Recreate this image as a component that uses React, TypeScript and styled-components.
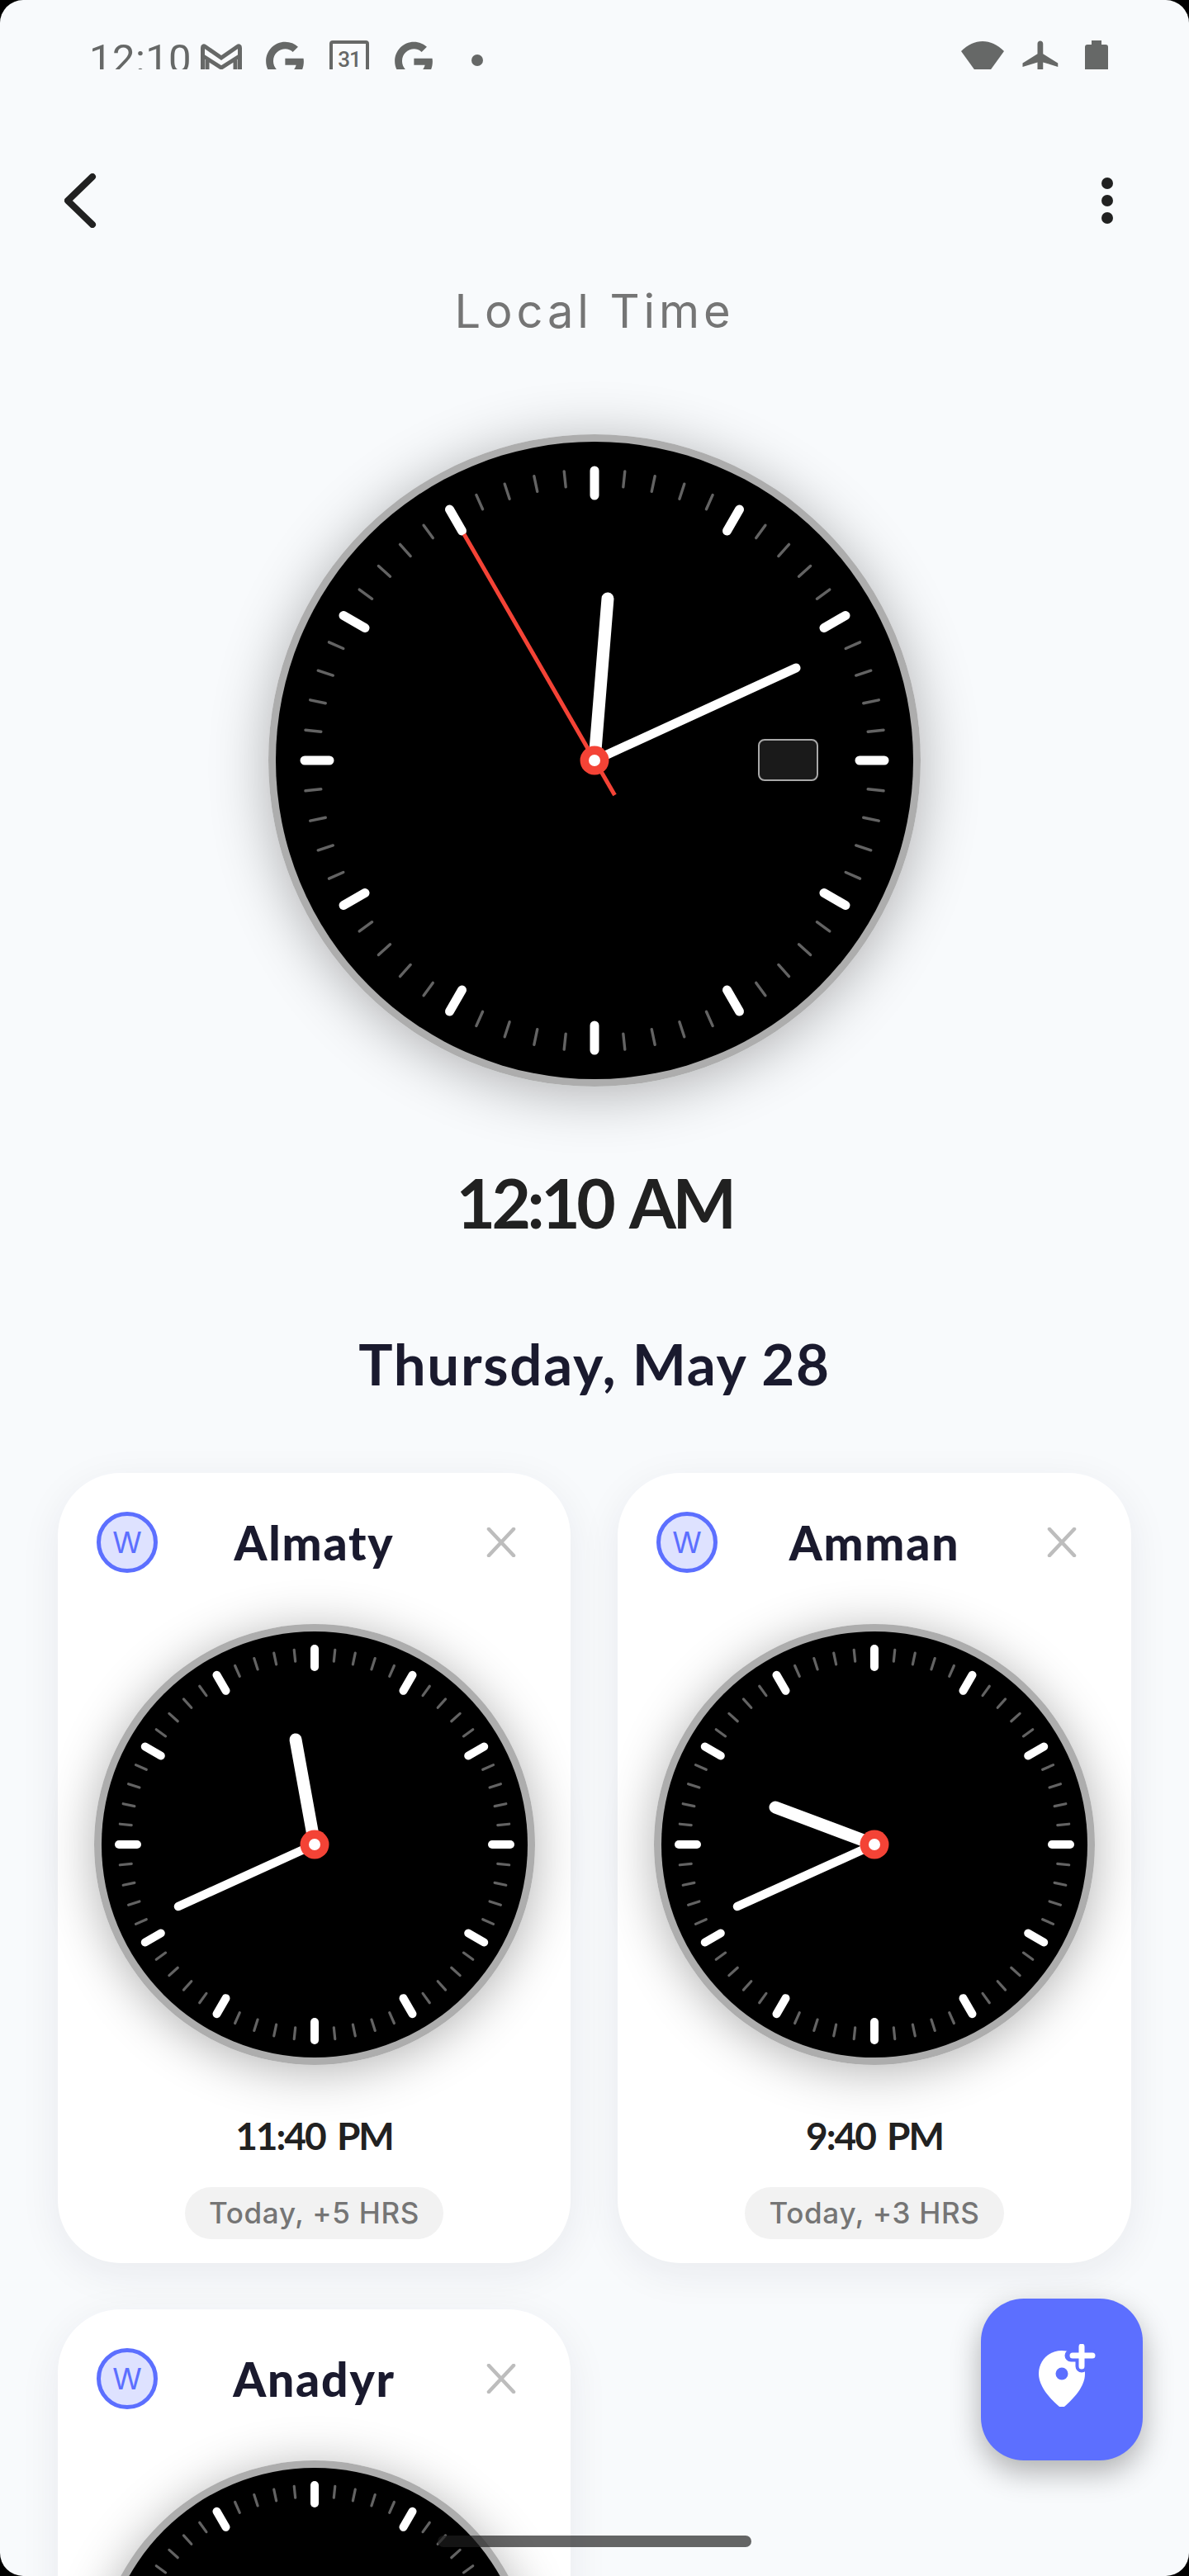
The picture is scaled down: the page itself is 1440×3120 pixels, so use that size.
import React from "react";
import styled, { createGlobalStyle } from "styled-components";
import { FaGoogle } from "react-icons/fa";

const GlobalStyle = createGlobalStyle`
  html, body {
    margin: 0;
    padding: 0;
    background: #000;
  }
  * {
    box-sizing: border-box;
  }
`;

const BLUE = "#5c6fff";
const INK = "#1a1a2e";
const STATUS_GREY = "#666867";

const Screen = styled.div`
  position: relative;
  width: 1440px;
  height: 3120px;
  overflow: hidden;
  border-radius: 28px;
  background: #f8fafc;
  display: flex;
  flex-direction: column;
  font-family: "Inter", "Liberation Sans", sans-serif;
`;

/* Status bar: the icons run past the bar's bottom edge and get cut off */
const StatusBar = styled.div`
  height: 84px;
  flex: none;
  overflow: hidden;
  display: flex;
  justify-content: space-between;
  padding: 0 98px 0 108px;
  color: ${STATUS_GREY};
`;

const StatusGroup = styled.div`
  display: flex;
  align-items: flex-start;
`;

const ClockText = styled.span`
  font-family: "Roboto", sans-serif;
  font-weight: 400;
  font-size: 49px;
  line-height: 49px;
  letter-spacing: 0.4px;
  margin-top: 47px;
  width: 135px;
`;

const GlyphSlot = styled.span<{ $top: number; $gap: number }>`
  display: block;
  line-height: 0;
  margin-top: ${(p) => p.$top}px;
  margin-right: ${(p) => p.$gap}px;
`;

const CalendarBadge = styled.div`
  width: 48px;
  height: 50px;
  margin-top: 49px;
  margin-right: 30px;
  border: 4px solid ${STATUS_GREY};
  border-radius: 4px;
  font-family: "Roboto", sans-serif;
  font-weight: 500;
  font-size: 26px;
  line-height: 26px;
  letter-spacing: -1px;
  text-align: center;
  padding-top: 6px;
`;

const Dot = styled.span`
  width: 14px;
  height: 14px;
  margin-top: 66px;
  border-radius: 50%;
  background: ${STATUS_GREY};
`;

const Battery = styled.div`
  position: relative;
  width: 28px;
  height: 60px;
  margin-top: 54px;
  border-radius: 3px;
  background: ${STATUS_GREY};
  &::before {
    content: "";
    position: absolute;
    top: -5px;
    left: 8px;
    width: 12px;
    height: 6px;
    background: ${STATUS_GREY};
  }
`;

const Toolbar = styled.div`
  height: 66px;
  margin-top: 126px;
  padding: 0 92px 0 78px;
  flex: none;
  display: flex;
  justify-content: space-between;
  align-items: center;
`;

const MenuDots = styled.div`
  display: flex;
  flex-direction: column;
  gap: 7px;
  span {
    width: 14px;
    height: 14px;
    border-radius: 50%;
    background: #212121;
  }
`;

const Title = styled.div`
  margin-top: 73px;
  font-size: 56px;
  line-height: 56px;
  letter-spacing: 4.9px;
  text-align: center;
  color: #757575;
`;

const Dial = styled.div<{ $size: number; $blur: number }>`
  flex: none;
  width: ${(p) => p.$size}px;
  height: ${(p) => p.$size}px;
  border-radius: 50%;
  box-shadow: 0 ${(p) => p.$blur / 8}px ${(p) => p.$blur}px rgba(0, 0, 0, 0.3);
  svg {
    display: block;
  }
`;

const MainDial = styled(Dial)`
  margin: 121px auto 0;
`;

const MainTime = styled.div`
  margin-top: 90px;
  font-family: "Lato", sans-serif;
  font-weight: 700;
  font-size: 82px;
  line-height: 100px;
  letter-spacing: -4.5px;
  word-spacing: 8px;
  text-align: center;
  color: #212121;
`;

const DateLine = styled.div`
  margin-top: 106px;
  font-family: "Lato", sans-serif;
  font-weight: 700;
  font-size: 69px;
  line-height: 80px;
  letter-spacing: 1.7px;
  text-align: center;
  color: ${INK};
`;

const CityGrid = styled.div`
  margin-top: 92px;
  padding: 0 70px;
  display: grid;
  grid-template-columns: 621px 622px;
  column-gap: 57px;
  row-gap: 56px;
`;

const CityCard = styled.div`
  height: 957px;
  padding-top: 47px;
  border-radius: 76px;
  background: #fff;
  box-shadow: 0 12px 50px rgba(30, 35, 60, 0.07);
  display: flex;
  flex-direction: column;
  align-items: center;
`;

const CardHeader = styled.div`
  width: 100%;
  padding: 0 47px;
  display: grid;
  grid-template-columns: 74px 1fr 74px;
  align-items: center;
`;

const TimezoneBadge = styled.div`
  width: 74px;
  height: 74px;
  border-radius: 50%;
  border: 5px solid ${BLUE};
  background: #dee2ff;
  color: ${BLUE};
  font-size: 36px;
  line-height: 64px;
  text-align: center;
`;

const CityName = styled.div`
  font-family: "Lato", sans-serif;
  font-weight: 900;
  font-size: 57px;
  line-height: 74px;
  letter-spacing: 1.8px;
  text-align: center;
  color: ${INK};
`;

const CloseMark = styled.div`
  display: flex;
  justify-content: center;
  line-height: 0;
`;

const CardDial = styled(Dial)`
  margin-top: 62px;
`;

const CardTime = styled.div`
  margin-top: 58px;
  font-family: "Lato", sans-serif;
  font-weight: 700;
  font-size: 46px;
  line-height: 56px;
  letter-spacing: -2px;
  word-spacing: 5px;
  color: #212121;
`;

const OffsetPill = styled.div`
  margin-top: 34px;
  height: 63px;
  padding: 0 29px;
  border-radius: 32px;
  background: #f2f2f2;
  color: #757575;
  font-weight: 500;
  font-size: 35px;
  line-height: 63px;
  letter-spacing: 0.7px;
  white-space: nowrap;
`;

const AddButton = styled.div`
  position: absolute;
  left: 1188px;
  top: 2784px;
  width: 196px;
  height: 196px;
  border-radius: 52px;
  background: ${BLUE};
  box-shadow: 0 14px 36px rgba(0, 0, 0, 0.3);
  display: flex;
  align-items: center;
  justify-content: center;
  svg {
    display: block;
    margin: 0 0 10px 16px;
  }
`;

const HomeIndicator = styled.div`
  position: absolute;
  left: 530px;
  bottom: 35px;
  width: 380px;
  height: 14px;
  border-radius: 7px;
  background: rgba(30, 30, 30, 0.68);
`;

type Point = [number, number];

interface DialSpec {
  radius: number;
  ring: number;
  hourTick: [number, number, number];
  minuteTick: [number, number, number];
  hourWidth: number;
  minuteWidth: number;
  hubOuter: number;
  hubInner: number;
}

const LARGE_DIAL: DialSpec = {
  radius: 395,
  ring: 9,
  hourTick: [351, 321, 11],
  minuteTick: [352, 333, 3.4],
  hourWidth: 15,
  minuteWidth: 11,
  hubOuter: 17.5,
  hubInner: 7,
};

const SMALL_DIAL: DialSpec = {
  radius: 267,
  ring: 9,
  hourTick: [237, 215, 10],
  minuteTick: [237, 223, 3.2],
  hourWidth: 15,
  minuteWidth: 10.5,
  hubOuter: 17.5,
  hubInner: 7,
};

interface AnalogClockProps {
  spec: DialSpec;
  hour: Point;
  minute: Point;
  second?: { tip: Point; tail: Point };
  dateWindow?: boolean;
}

function AnalogClock({ spec, hour, minute, second, dateWindow }: AnalogClockProps) {
  const r = spec.radius;
  const ticks = Array.from({ length: 60 }, (_, i) => i);
  return (
    <svg width={r * 2} height={r * 2} viewBox={`${-r} ${-r} ${r * 2} ${r * 2}`}>
      <circle r={r} fill="#adadad" />
      <circle r={r - spec.ring} fill="#000" />
      {ticks.map((i) => {
        const major = i % 5 === 0;
        const [outer, inner, width] = major ? spec.hourTick : spec.minuteTick;
        return (
          <line
            key={i}
            x1={0}
            y1={-outer}
            x2={0}
            y2={-inner}
            stroke={major ? "#fff" : "#636363"}
            strokeWidth={width}
            strokeLinecap="round"
            transform={`rotate(${i * 6})`}
          />
        );
      })}
      {dateWindow && (
        <rect x={199} y={-25} width={71} height={49} rx={7} fill="#1a1a1a" stroke="#a8a8a8" strokeWidth={2} />
      )}
      <line x1={0} y1={0} x2={minute[0]} y2={minute[1]} stroke="#fff" strokeWidth={spec.minuteWidth} strokeLinecap="round" />
      <line x1={0} y1={0} x2={hour[0]} y2={hour[1]} stroke="#fff" strokeWidth={spec.hourWidth} strokeLinecap="round" />
      {second && (
        <line x1={second.tail[0]} y1={second.tail[1]} x2={second.tip[0]} y2={second.tip[1]} stroke="#f44336" strokeWidth={5} />
      )}
      <circle r={spec.hubOuter} fill="#f44336" />
      <circle r={spec.hubInner} fill="#fff" />
    </svg>
  );
}

const CloseIcon = () => (
  <svg width="36" height="36" viewBox="0 0 36 36">
    <path d="M3 2 33 34M33 2 3 34" stroke="#bdbdbd" strokeWidth="4.5" strokeLinecap="round" fill="none" />
  </svg>
);

const BackIcon = () => (
  <svg width="40" height="66" viewBox="0 0 40 66">
    <path d="M34 4 4 33 34 62" stroke="#212121" strokeWidth="8" strokeLinecap="round" strokeLinejoin="round" fill="none" />
  </svg>
);

const MailIcon = () => (
  <svg width="50" height="40" viewBox="0 0 50 40">
    <path
      d="M2.5 40V5Q2.5 1.500 5.500 3.500L25 17 44.500 3.500Q47.500 1.500 47.500 5V40"
      stroke={STATUS_GREY}
      strokeWidth="5"
      fill="none"
    />
    <path d="M3 15 25 29 47 15M8 20V40M42 20V40" stroke={STATUS_GREY} strokeWidth="5" fill="none" />
  </svg>
);

const WifiIcon = () => (
  <svg width="52" height="40" viewBox="0 0 52 40">
    <path d="M0 12C8 4 17 0 26 0s18 4 26 12L26 48Z" fill={STATUS_GREY} />
  </svg>
);

const PlaneIcon = () => (
  <svg width="54" height="54" viewBox="0 0 24 24">
    <path
      d="M21 16v-2l-8-5V3.500c0-.83-.67-1.500-1.500-1.500S10 2.670 10 3.500V9l-8 5v2l8-2.500V19l-2 1.500V22l3.500-1 3.500 1v-1.500L13 19v-5.500l8 2.500z"
      fill={STATUS_GREY}
    />
  </svg>
);

const AddPinIcon = () => (
  <svg width="72" height="76" viewBox="0 0 72 76">
    <path
      d="M28 8C12.500 8 0 20 0 36c0 16 14 30 24.500 39.500q3.500 2.500 7 0C42 66 56 52 56 36 56 20 43.500 8 28 8Z"
      fill="#fff"
    />
    <circle cx="28" cy="36" r="7.500" fill={BLUE} />
    <path d="M52 1v26M39 14h26" stroke={BLUE} strokeWidth="15" strokeLinecap="round" />
    <path d="M52 3v24M41 14h24" stroke="#fff" strokeWidth="7" strokeLinecap="round" />
  </svg>
);

interface City {
  name: string;
  hour: Point;
  minute: Point;
  time?: string;
  offset?: string;
}

const CITIES: City[] = [
  { name: "Almaty", hour: [-23, -127], minute: [-165, 75], time: "11:40 PM", offset: "Today, +5 HRS" },
  { name: "Amman", hour: [-120, -45], minute: [-166, 75], time: "9:40 PM", offset: "Today, +3 HRS" },
  { name: "Anadyr", hour: [128, 30], minute: [-165, 75] },
];

export default function App() {
  return (
    <>
      <GlobalStyle />
      <Screen>
        <StatusBar>
          <StatusGroup>
            <ClockText>12:10</ClockText>
            <GlyphSlot $top={53} $gap={28}>
              <MailIcon />
            </GlyphSlot>
            <GlyphSlot $top={50} $gap={30}>
              <FaGoogle size={48} />
            </GlyphSlot>
            <CalendarBadge>31</CalendarBadge>
            <GlyphSlot $top={50} $gap={46}>
              <FaGoogle size={48} />
            </GlyphSlot>
            <Dot />
          </StatusGroup>
          <StatusGroup>
            <GlyphSlot $top={50} $gap={18}>
              <WifiIcon />
            </GlyphSlot>
            <GlyphSlot $top={45} $gap={26}>
              <PlaneIcon />
            </GlyphSlot>
            <Battery />
          </StatusGroup>
        </StatusBar>

        <Toolbar>
          <BackIcon />
          <MenuDots>
            <span />
            <span />
            <span />
          </MenuDots>
        </Toolbar>

        <Title>Local Time</Title>

        <MainDial $size={790} $blur={70}>
          <AnalogClock
            spec={LARGE_DIAL}
            hour={[16, -196]}
            minute={[244, -112]}
            second={{ tip: [-158, -274], tail: [24.5, 42] }}
            dateWindow
          />
        </MainDial>

        <MainTime>12:10 AM</MainTime>
        <DateLine>Thursday, May 28</DateLine>

        <CityGrid>
          {CITIES.map((city) => (
            <CityCard key={city.name}>
              <CardHeader>
                <TimezoneBadge>W</TimezoneBadge>
                <CityName>{city.name}</CityName>
                <CloseMark>
                  <CloseIcon />
                </CloseMark>
              </CardHeader>
              <CardDial $size={534} $blur={60}>
                <AnalogClock spec={SMALL_DIAL} hour={city.hour} minute={city.minute} />
              </CardDial>
              {city.time && <CardTime>{city.time}</CardTime>}
              {city.offset && <OffsetPill>{city.offset}</OffsetPill>}
            </CityCard>
          ))}
        </CityGrid>

        <AddButton>
          <AddPinIcon />
        </AddButton>
        <HomeIndicator />
      </Screen>
    </>
  );
}
